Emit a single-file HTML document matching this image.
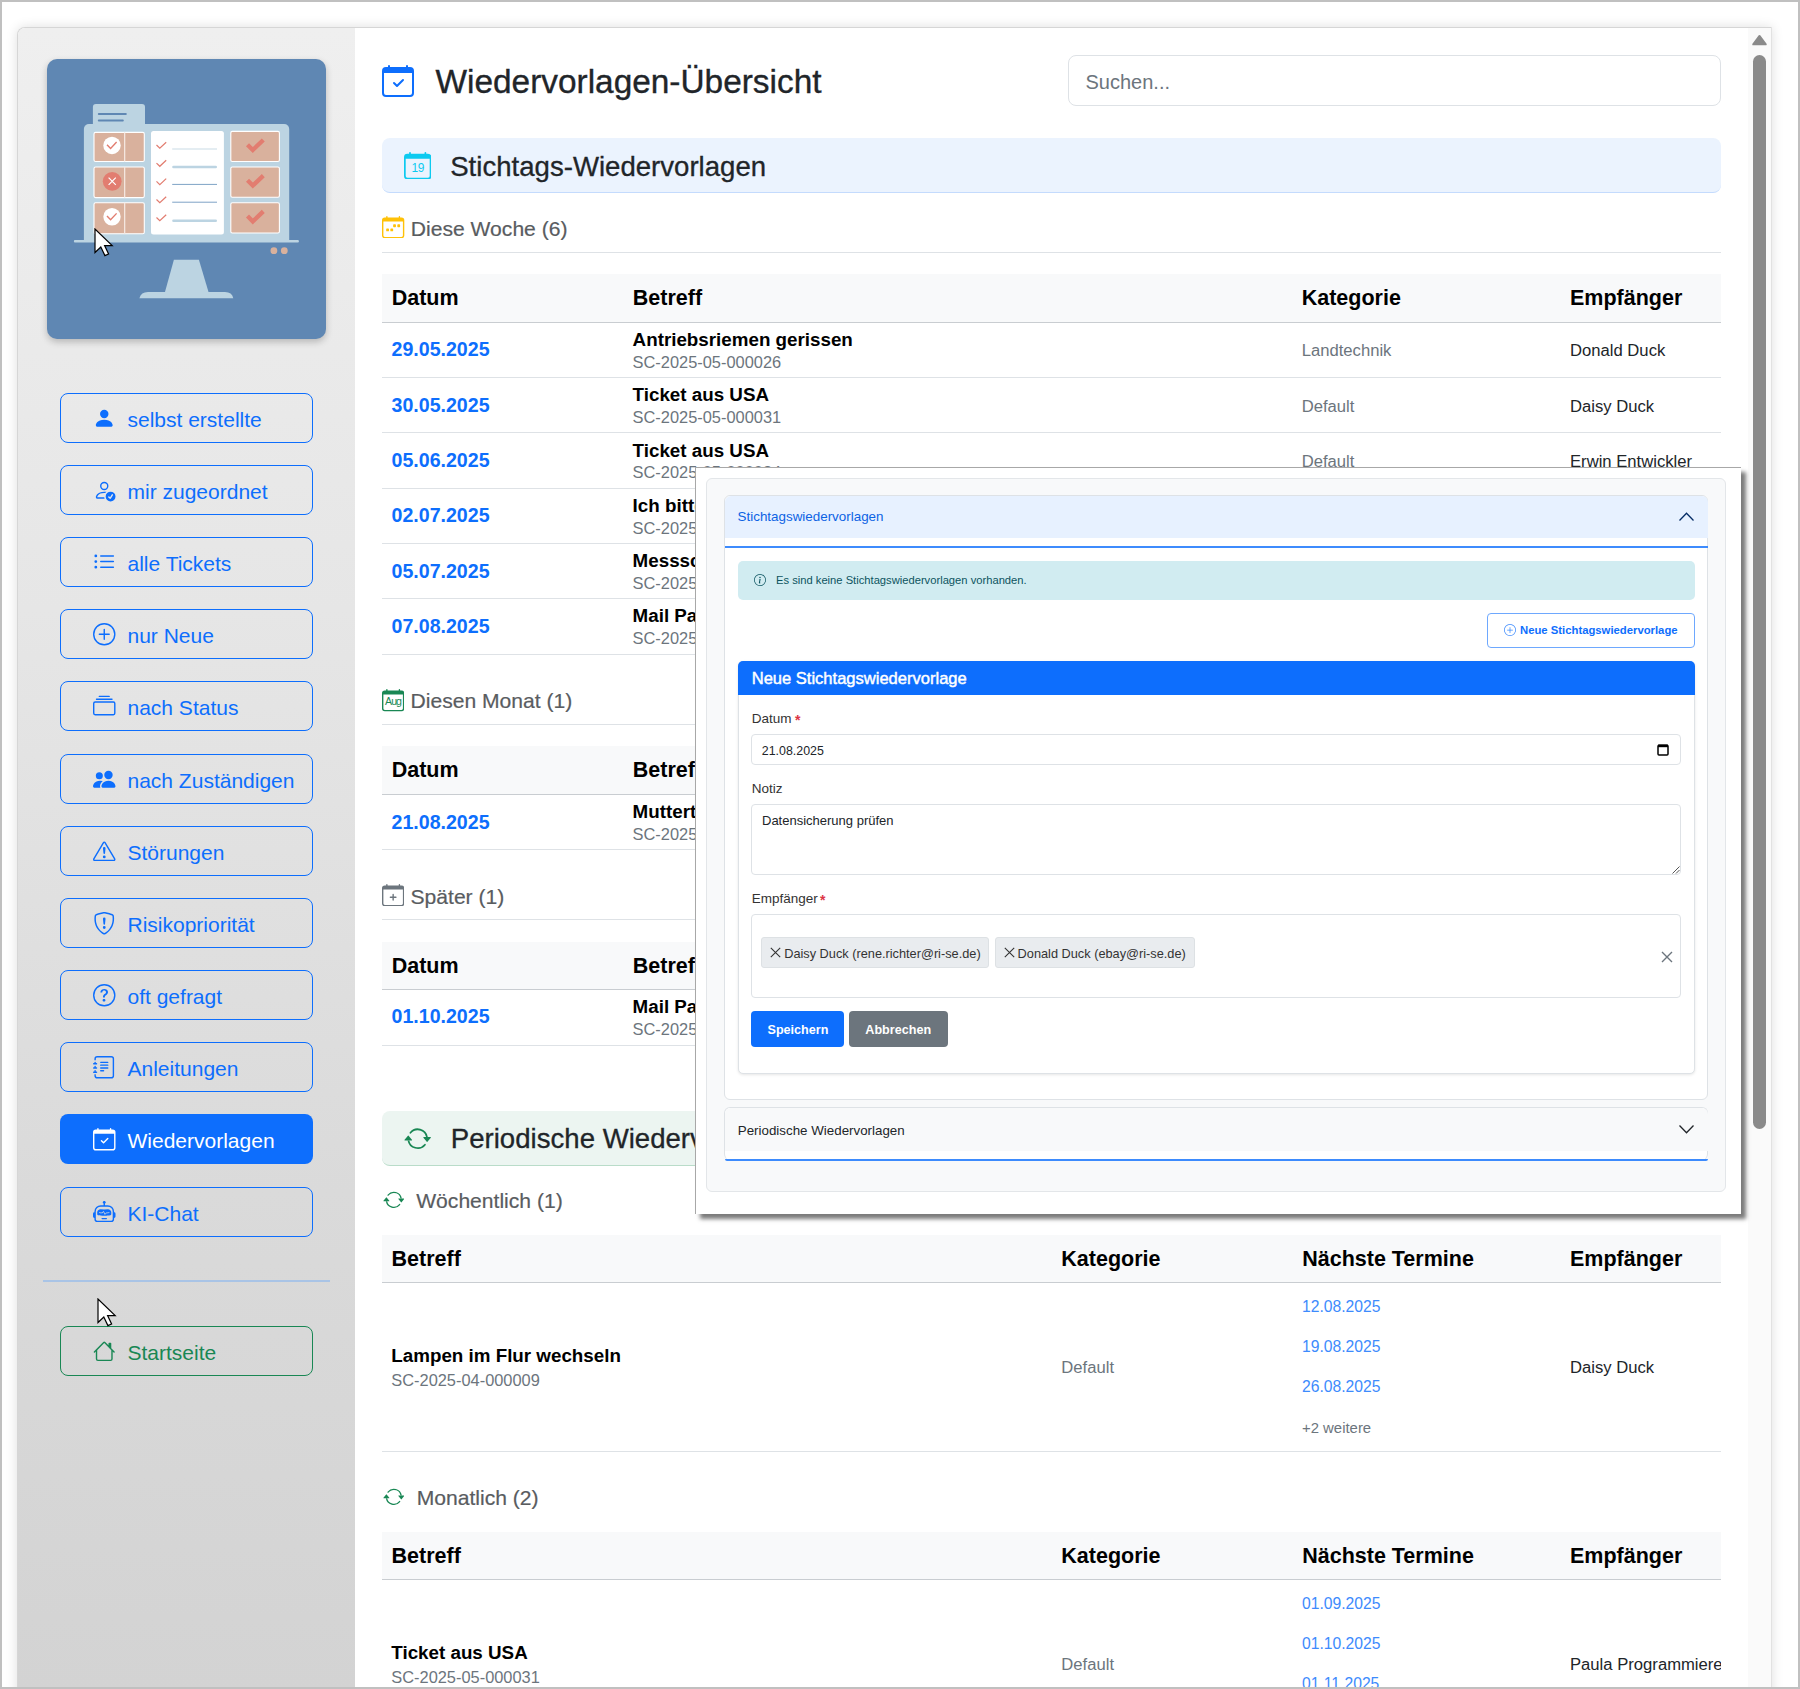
<!DOCTYPE html><html><head><meta charset="utf-8"><title>Wiedervorlagen</title><style>
html,body{margin:0;padding:0;width:1800px;height:1689px;overflow:hidden;background:#fff;font-family:"Liberation Sans",sans-serif;}
.t{position:absolute;white-space:nowrap;}
.r{position:absolute;box-sizing:border-box;}
</style></head><body>
<div class="r" style="left:17.00px;top:27.00px;width:1755.00px;height:1700.00px;background:#fff;border-top:1px solid #d6d6d6;border-left:1px solid #d6d6d6;border-right:1px solid #e2e2e2;box-shadow:0 0 12px rgba(0,0,0,0.13);border-top-left-radius:8px;"></div>
<div class="r" style="left:18.00px;top:28.00px;width:337.00px;height:1661.00px;background:linear-gradient(to bottom,#efefef 0%,#e6e6e6 35%,#dadada 70%,#d3d3d3 100%);border-top-left-radius:7px;"></div>
<div class="r" style="left:1748.00px;top:28.00px;width:23.00px;height:1661.00px;background:#fafafa;"></div>
<svg class="r" style="left:1750px;top:33px" width="19" height="14" viewBox="0 0 19 14"><path d="M9.5 2.9 L15.8 11.4 L3.2 11.4 Z" fill="#8a8a8a" stroke="#8a8a8a" stroke-width="1.9" stroke-linejoin="round"/></svg>
<div class="r" style="left:1753.00px;top:55.00px;width:13.00px;height:1074.00px;background:#8a8a8a;border-radius:6.5px;"></div>
<div class="r" style="left:47px;top:59px;width:279px;height:280px;background:#5f87b3;border-radius:10px;box-shadow:0 3px 7px rgba(0,0,0,0.22);overflow:hidden">
<svg width="279" height="280" viewBox="47 59 279 280" style="position:absolute;left:0;top:0"><path d="M83.9 241.4 V129 a5 5 0 0 1 5 -5 H284.2 a5 5 0 0 1 5 5 V241.4 Z" fill="#bcd4e2"/><rect x="73.9" y="240" width="225" height="2.4" rx="1" fill="#bcd4e2"/><rect x="92.9" y="103.9" width="52.1" height="30" rx="3" fill="#bcd4e2"/><rect x="97.8" y="112.9" width="29" height="2" rx="1" fill="#5f87b3"/><rect x="97.8" y="119.5" width="26" height="2" rx="1" fill="#5f87b3"/><rect x="94" y="132.4" width="50.3" height="29.099999999999994" rx="1.5" fill="#d9b19d" stroke="#fff" stroke-width="1.1"/><rect x="124" y="132.4" width="1.3" height="29.099999999999994" fill="#f4e6df"/><circle cx="112" cy="145.45" r="8.7" fill="#fff"/><path d="M107 144.64999999999998 l3.6 3.8 l6 -6.4" fill="none" stroke="#e27d70" stroke-width="1.4"/><rect x="94" y="167" width="50.3" height="30.599999999999994" rx="1.5" fill="#d9b19d" stroke="#fff" stroke-width="1.1"/><rect x="124" y="167" width="1.3" height="30.599999999999994" fill="#f4e6df"/><circle cx="112.2" cy="181.3" r="9.4" fill="#e27d70"/><path d="M108.6 177.70000000000002 l7.2 7.2 M115.8 177.70000000000002 l-7.2 7.2" stroke="#fff" stroke-width="1.2"/><rect x="94" y="202.8" width="50.3" height="30.94999999999999" rx="1.5" fill="#d9b19d" stroke="#fff" stroke-width="1.1"/><rect x="124" y="202.8" width="1.3" height="30.94999999999999" fill="#f4e6df"/><circle cx="112" cy="216.775" r="8.7" fill="#fff"/><path d="M107 215.975 l3.6 3.8 l6 -6.4" fill="none" stroke="#e27d70" stroke-width="1.4"/><rect x="151" y="131" width="72.9" height="103.4" rx="2.5" fill="#fff"/><path d="M156.5 145.0 l3.3 3.2 l6.4 -6.0" fill="none" stroke="#e27d70" stroke-width="1.2"/><rect x="172.2" y="148.4" width="44.8" height="1.2" fill="#d3e1ea"/><path d="M156.5 163.1 l3.3 3.2 l6.4 -6.0" fill="none" stroke="#e27d70" stroke-width="1.2"/><rect x="172.2" y="165.7" width="44.8" height="2.6" rx="1.3" fill="#bcd4e2"/><path d="M156.5 181.4 l3.3 3.2 l6.4 -6.0" fill="none" stroke="#e27d70" stroke-width="1.2"/><rect x="172.2" y="183.9" width="44.8" height="1" fill="#7fa3c6"/><path d="M156.5 199.5 l3.3 3.2 l6.4 -6.0" fill="none" stroke="#e27d70" stroke-width="1.2"/><rect x="172.2" y="201.7" width="44.8" height="1" fill="#7fa3c6"/><path d="M156.5 217.5 l3.3 3.2 l6.4 -6.0" fill="none" stroke="#e27d70" stroke-width="1.2"/><rect x="172.2" y="219.5" width="44.8" height="2.6" rx="1.3" fill="#bcd4e2"/><rect x="230.8" y="131.4" width="48.6" height="30.099999999999994" rx="1.5" fill="#d9b19d" stroke="#fff" stroke-width="1.1"/><path d="M247.5 144.64999999999998 l5.3 5.3 l10.5 -10" fill="none" stroke="#e27d70" stroke-width="4.3"/><rect x="230.8" y="167" width="48.6" height="30.19999999999999" rx="1.5" fill="#d9b19d" stroke="#fff" stroke-width="1.1"/><path d="M247.5 180.29999999999998 l5.3 5.3 l10.5 -10" fill="none" stroke="#e27d70" stroke-width="4.3"/><rect x="230.8" y="202.8" width="48.6" height="30.19999999999999" rx="1.5" fill="#d9b19d" stroke="#fff" stroke-width="1.1"/><path d="M247.5 216.1 l5.3 5.3 l10.5 -10" fill="none" stroke="#e27d70" stroke-width="4.3"/><circle cx="273.9" cy="250.7" r="3.4" fill="#d9b19d"/><circle cx="284.3" cy="250.7" r="3.4" fill="#d9b19d"/><path d="M173.9 259.7 H198.9 L208.6 292.2 H164.9 Z" fill="#bcd4e2"/><path d="M139.4 298.3 Q141 292 148 292 H225 Q232 292 233.3 298.3 Z" fill="#bcd4e2"/></svg>
</div>
<div class="r" style="left:60.00px;top:393.00px;width:253.00px;height:50.00px;border:1px solid #0d6efd;border-radius:8px;"></div>
<svg class="r" style="left:93.20px;top:407.20px;" width="22.50" height="22.50" viewBox="0 0 16 16" fill="#0d6efd"><path d="M3 14s-1 0-1-1 1-4 6-4 6 3 6 4-1 1-1 1zm5-6a3 3 0 1 0 0-6 3 3 0 0 0 0 6"/></svg>
<div class="t" style="left:127.50px;top:409.22px;font-size:21px;line-height:21px;color:#0d6efd;">selbst erstellte</div>
<div class="r" style="left:60.00px;top:465.00px;width:253.00px;height:50.00px;border:1px solid #0d6efd;border-radius:8px;"></div>
<svg class="r" style="left:93.20px;top:479.20px;" width="22.50" height="22.50" viewBox="0 0 16 16" fill="#0d6efd"><path d="M12.5 16a3.5 3.5 0 1 0 0-7 3.5 3.5 0 0 0 0 7m1.679-4.493-1.335 2.226a.75.75 0 0 1-1.174.144l-.774-.773a.5.5 0 0 1 .708-.708l.547.548 1.17-1.951a.5.5 0 1 1 .858.514M11 5a3 3 0 1 1-6 0 3 3 0 0 1 6 0M8 7a2 2 0 1 0 0-4 2 2 0 0 0 0 4"/><path d="M8.256 14a4.5 4.5 0 0 1-.229-1.004H3c.001-.246.154-.986.832-1.664C4.484 10.680 5.711 10 8 10q.39 0 .74.025c.226-.341.496-.65.804-.918Q8.844 9.002 8 9c-5 0-6 3-6 4s1 1 1 1z"/></svg>
<div class="t" style="left:127.50px;top:481.22px;font-size:21px;line-height:21px;color:#0d6efd;">mir zugeordnet</div>
<div class="r" style="left:60.00px;top:537.00px;width:253.00px;height:50.00px;border:1px solid #0d6efd;border-radius:8px;"></div>
<svg class="r" style="left:93.20px;top:551.20px;" width="22.50" height="22.50" viewBox="0 0 16 16" fill="#0d6efd"><path fill-rule="evenodd" d="M5 11.5a.5.5 0 0 1 .5-.5h9a.5.5 0 0 1 0 1h-9a.5.5 0 0 1-.5-.5m0-4a.5.5 0 0 1 .5-.5h9a.5.5 0 0 1 0 1h-9a.5.5 0 0 1-.5-.5m0-4a.5.5 0 0 1 .5-.5h9a.5.5 0 0 1 0 1h-9a.5.5 0 0 1-.5-.5m-3 1a1 1 0 1 0 0-2 1 1 0 0 0 0 2m0 4a1 1 0 1 0 0-2 1 1 0 0 0 0 2m0 4a1 1 0 1 0 0-2 1 1 0 0 0 0 2"/></svg>
<div class="t" style="left:127.50px;top:553.22px;font-size:21px;line-height:21px;color:#0d6efd;">alle Tickets</div>
<div class="r" style="left:60.00px;top:609.00px;width:253.00px;height:50.00px;border:1px solid #0d6efd;border-radius:8px;"></div>
<svg class="r" style="left:93.20px;top:623.20px;" width="22.50" height="22.50" viewBox="0 0 16 16" fill="#0d6efd"><path d="M8 15A7 7 0 1 1 8 1a7 7 0 0 1 0 14m0 1A8 8 0 1 0 8 0a8 8 0 0 0 0 16"/><path d="M8 4a.5.5 0 0 1 .5.5v3h3a.5.5 0 0 1 0 1h-3v3a.5.5 0 0 1-1 0v-3h-3a.5.5 0 0 1 0-1h3v-3A.5.5 0 0 1 8 4"/></svg>
<div class="t" style="left:127.50px;top:625.22px;font-size:21px;line-height:21px;color:#0d6efd;">nur Neue</div>
<div class="r" style="left:60.00px;top:681.00px;width:253.00px;height:50.00px;border:1px solid #0d6efd;border-radius:8px;"></div>
<svg class="r" style="left:93.20px;top:695.20px;" width="22.50" height="22.50" viewBox="0 0 16 16" fill="#0d6efd"><path d="M2.5 3.5a.5.5 0 0 1 0-1h11a.5.5 0 0 1 0 1zm2-2a.5.5 0 0 1 0-1h7a.5.5 0 0 1 0 1zM0 13a1.5 1.5 0 0 0 1.5 1.5h13A1.5 1.5 0 0 0 16 13V6a1.5 1.5 0 0 0-1.5-1.5h-13A1.5 1.5 0 0 0 0 6zm1.5.5A.5.5 0 0 1 1 13V6a.5.5 0 0 1 .5-.5h13a.5.5 0 0 1 .5.5v7a.5.5 0 0 1-.5.5z"/></svg>
<div class="t" style="left:127.50px;top:697.22px;font-size:21px;line-height:21px;color:#0d6efd;">nach Status</div>
<div class="r" style="left:60.00px;top:754.00px;width:253.00px;height:50.00px;border:1px solid #0d6efd;border-radius:8px;"></div>
<svg class="r" style="left:93.20px;top:768.20px;" width="22.50" height="22.50" viewBox="0 0 16 16" fill="#0d6efd"><path d="M7 14s-1 0-1-1 1-4 5-4 5 3 5 4-1 1-1 1zm4-6a3 3 0 1 0 0-6 3 3 0 0 0 0 6m-5.784 6A2.24 2.24 0 0 1 5 13c0-1.355.68-2.750 1.936-3.720A6.3 6.3 0 0 0 5 9c-4 0-5 3-5 4s1 1 1 1zM4.500 8a2.500 2.500 0 1 0 0-5 2.500 2.500 0 0 0 0 5"/></svg>
<div class="t" style="left:127.50px;top:770.22px;font-size:21px;line-height:21px;color:#0d6efd;">nach Zuständigen</div>
<div class="r" style="left:60.00px;top:826.00px;width:253.00px;height:50.00px;border:1px solid #0d6efd;border-radius:8px;"></div>
<svg class="r" style="left:93.20px;top:840.20px;" width="22.50" height="22.50" viewBox="0 0 16 16" fill="#0d6efd"><path d="M7.938 2.016A.13.13 0 0 1 8.002 2a.13.13 0 0 1 .063.016.15.15 0 0 1 .054.057l6.857 11.667c.036.06.035.124.002.183a.2.2 0 0 1-.054.06.1.1 0 0 1-.066.017H1.146a.1.1 0 0 1-.066-.017.2.2 0 0 1-.054-.06.18.18 0 0 1 .002-.183L7.884 2.073a.15.15 0 0 1 .054-.057m1.044-.45a1.13 1.13 0 0 0-1.96 0L.165 13.233c-.457.778.091 1.767.98 1.767h13.713c.889 0 1.438-.99.98-1.767z"/><path d="M7.002 12a1 1 0 1 1 2 0 1 1 0 0 1-2 0M7.1 5.995a.905.905 0 1 1 1.8 0l-.35 3.507a.552.552 0 0 1-1.1 0z"/></svg>
<div class="t" style="left:127.50px;top:842.22px;font-size:21px;line-height:21px;color:#0d6efd;">Störungen</div>
<div class="r" style="left:60.00px;top:898.00px;width:253.00px;height:50.00px;border:1px solid #0d6efd;border-radius:8px;"></div>
<svg class="r" style="left:93.20px;top:912.20px;" width="22.50" height="22.50" viewBox="0 0 16 16" fill="#0d6efd"><path d="M5.338 1.59a61 61 0 0 0-2.837.856.48.48 0 0 0-.328.39c-.554 4.157.726 7.19 2.253 9.188a10.7 10.7 0 0 0 2.287 2.233c.346.244.652.42.893.533q.18.085.293.118a1 1 0 0 0 .101.025 1 1 0 0 0 .1-.025q.114-.034.294-.118c.24-.113.547-.29.893-.533a10.7 10.7 0 0 0 2.287-2.233c1.527-1.997 2.807-5.031 2.253-9.188a.48.48 0 0 0-.328-.39c-.651-.213-1.75-.56-2.837-.855C9.552 1.29 8.531 1.067 8 1.067c-.53 0-1.552.223-2.662.524zM5.072.56C6.157.265 7.31 0 8 0s1.843.265 2.928.56c1.11.3 2.229.655 2.887.87a1.54 1.54 0 0 1 1.044 1.262c.596 4.477-.787 7.795-2.465 9.99a11.8 11.8 0 0 1-2.517 2.453 7 7 0 0 1-1.048.625c-.28.132-.581.24-.829.24s-.548-.108-.829-.24a7 7 0 0 1-1.048-.625 11.8 11.8 0 0 1-2.517-2.453C1.928 10.487.545 7.169 1.141 2.692A1.54 1.54 0 0 1 2.185 1.43 63 63 0 0 1 5.072.56"/><path d="M7.001 11a1 1 0 1 1 2 0 1 1 0 0 1-2 0M7.1 4.995a.905.905 0 1 1 1.8 0l-.35 3.507a.553.553 0 0 1-1.1 0z"/></svg>
<div class="t" style="left:127.50px;top:914.22px;font-size:21px;line-height:21px;color:#0d6efd;">Risikopriorität</div>
<div class="r" style="left:60.00px;top:970.00px;width:253.00px;height:50.00px;border:1px solid #0d6efd;border-radius:8px;"></div>
<svg class="r" style="left:93.20px;top:984.20px;" width="22.50" height="22.50" viewBox="0 0 16 16" fill="#0d6efd"><path d="M8 15A7 7 0 1 1 8 1a7 7 0 0 1 0 14m0 1A8 8 0 1 0 8 0a8 8 0 0 0 0 16"/><path d="M5.255 5.786a.237.237 0 0 0 .241.247h.825c.138 0 .248-.113.266-.25.09-.656.54-1.134 1.342-1.134.686 0 1.314.343 1.314 1.168 0 .635-.374.927-.965 1.371-.673.489-1.206 1.06-1.168 1.987l.003.217a.25.25 0 0 0 .25.246h.811a.25.25 0 0 0 .25-.25v-.105c0-.718.273-.927 1.01-1.486.609-.463 1.244-.977 1.244-2.056 0-1.511-1.276-2.241-2.673-2.241-1.267 0-2.655.59-2.75 2.286m1.557 5.763c0 .533.425.927 1.01.927.609 0 1.028-.394 1.028-.927 0-.552-.42-.94-1.029-.94-.584 0-1.009.388-1.009.94"/></svg>
<div class="t" style="left:127.50px;top:986.22px;font-size:21px;line-height:21px;color:#0d6efd;">oft gefragt</div>
<div class="r" style="left:60.00px;top:1042.00px;width:253.00px;height:50.00px;border:1px solid #0d6efd;border-radius:8px;"></div>
<svg class="r" style="left:93.20px;top:1056.20px;" width="22.50" height="22.50" viewBox="0 0 16 16" fill="#0d6efd"><path d="M5 10.5a.5.5 0 0 1 .5-.5h2a.5.5 0 0 1 0 1h-2a.5.5 0 0 1-.5-.5m0-2a.5.5 0 0 1 .5-.5h5a.5.5 0 0 1 0 1h-5a.5.5 0 0 1-.5-.5m0-2a.5.5 0 0 1 .5-.5h5a.5.5 0 0 1 0 1h-5a.5.5 0 0 1-.5-.5m0-2a.5.5 0 0 1 .5-.5h5a.5.5 0 0 1 0 1h-5a.5.5 0 0 1-.5-.5"/><path d="M3 0h10a2 2 0 0 1 2 2v12a2 2 0 0 1-2 2H3a2 2 0 0 1-2-2v-1h1v1a1 1 0 0 0 1 1h10a1 1 0 0 0 1-1V2a1 1 0 0 0-1-1H3a1 1 0 0 0-1 1v1H1V2a2 2 0 0 1 2-2"/><path d="M1 5v-.5a.5.5 0 0 1 1 0V5h.5a.5.5 0 0 1 0 1h-2a.5.5 0 0 1 0-1zm0 3v-.5a.5.5 0 0 1 1 0V8h.5a.5.5 0 0 1 0 1h-2a.5.5 0 0 1 0-1zm0 3v-.5a.5.5 0 0 1 1 0v.5h.5a.5.5 0 0 1 0 1h-2a.5.5 0 0 1 0-1z"/></svg>
<div class="t" style="left:127.50px;top:1058.22px;font-size:21px;line-height:21px;color:#0d6efd;">Anleitungen</div>
<div class="r" style="left:60.00px;top:1114.00px;width:253.00px;height:50.00px;background:#0d6efd;border-radius:8px;"></div>
<svg class="r" style="left:93.20px;top:1128.20px;" width="22.50" height="22.50" viewBox="0 0 16 16" fill="#fff"><path d="M10.854 7.146a.5.5 0 0 1 0 .708l-3 3a.5.5 0 0 1-.708 0l-1.5-1.5a.5.5 0 1 1 .708-.708L7.5 9.793l2.646-2.647a.5.5 0 0 1 .708 0"/><path d="M3.5 0a.5.5 0 0 1 .5.5V1h8V.5a.5.5 0 0 1 1 0V1h1a2 2 0 0 1 2 2v11a2 2 0 0 1-2 2H2a2 2 0 0 1-2-2V3a2 2 0 0 1 2-2h1V.5a.5.5 0 0 1 .5-.5M1 4v10a1 1 0 0 0 1 1h12a1 1 0 0 0 1-1V4z"/></svg>
<div class="t" style="left:127.50px;top:1130.22px;font-size:21px;line-height:21px;color:#fff;">Wiedervorlagen</div>
<div class="r" style="left:60.00px;top:1187.00px;width:253.00px;height:50.00px;border:1px solid #0d6efd;border-radius:8px;"></div>
<svg class="r" style="left:93.20px;top:1201.20px;" width="22.50" height="22.50" viewBox="0 0 16 16" fill="#0d6efd"><path d="M6 12.5a.5.5 0 0 1 .5-.5h3a.5.5 0 0 1 0 1h-3a.5.5 0 0 1-.5-.5M3 8.062C3 6.76 4.235 5.765 5.53 5.886a26.6 26.6 0 0 0 4.94 0C11.765 5.765 13 6.76 13 8.062v1.157a.93.93 0 0 1-.765.935c-.845.147-2.34.346-4.235.346s-3.39-.2-4.235-.346A.93.93 0 0 1 3 9.219zm4.542-.827a.25.25 0 0 0-.217.068l-.92.9a25 25 0 0 1-1.871-.183.25.25 0 0 0-.068.495c.55.076 1.232.149 2.02.193a.25.25 0 0 0 .189-.071l.754-.736.847 1.71a.25.25 0 0 0 .404.062l.932-.97a25 25 0 0 0 1.922-.188.25.25 0 0 0-.068-.495c-.538.074-1.207.145-1.98.189a.25.25 0 0 0-.166.076l-.754.785-.842-1.7a.25.25 0 0 0-.182-.135"/><path d="M8.5 1.866a1 1 0 1 0-1 0V3h-2A4.5 4.5 0 0 0 1 7.5V8a1 1 0 0 0-1 1v2a1 1 0 0 0 1 1v1a2 2 0 0 0 2 2h10a2 2 0 0 0 2-2v-1a1 1 0 0 0 1-1V9a1 1 0 0 0-1-1v-.5A4.5 4.5 0 0 0 10.5 3h-2zM14 7.5V13a1 1 0 0 1-1 1H3a1 1 0 0 1-1-1V7.5A3.5 3.5 0 0 1 5.5 4h5A3.5 3.5 0 0 1 14 7.5"/></svg>
<div class="t" style="left:127.50px;top:1203.22px;font-size:21px;line-height:21px;color:#0d6efd;">KI-Chat</div>
<div class="r" style="left:43.00px;top:1280.00px;width:287.00px;height:2.00px;background:#a9c4e6;"></div>
<div class="r" style="left:60.00px;top:1326.00px;width:253.00px;height:50.00px;border:1px solid #198754;border-radius:8px;"></div>
<svg class="r" style="left:93.20px;top:1340.20px;" width="22.50" height="22.50" viewBox="0 0 16 16" fill="#198754"><path d="M8.707 1.5a1 1 0 0 0-1.414 0L.646 8.146a.5.5 0 0 0 .708.708L2 8.207V13.5A1.5 1.5 0 0 0 3.5 15h9a1.5 1.5 0 0 0 1.5-1.5V8.207l.646.647a.5.5 0 0 0 .708-.708L13 5.793V2.5a.5.5 0 0 0-.5-.5h-1a.5.5 0 0 0-.5.5v1.293zM13 7.207V13.5a.5.5 0 0 1-.5.5h-9a.5.5 0 0 1-.5-.5V7.207l5-5z"/></svg>
<div class="t" style="left:127.50px;top:1342.22px;font-size:21px;line-height:21px;color:#198754;">Startseite</div>
<svg class="r" style="left:382.00px;top:65.00px;" width="32.00" height="32.00" viewBox="0 0 16 16" fill="#0d6efd"><path d="M10.854 7.146a.5.5 0 0 1 0 .708l-3 3a.5.5 0 0 1-.708 0l-1.5-1.5a.5.5 0 1 1 .708-.708L7.5 9.793l2.646-2.647a.5.5 0 0 1 .708 0"/><path d="M3.5 0a.5.5 0 0 1 .5.5V1h8V.5a.5.5 0 0 1 1 0V1h1a2 2 0 0 1 2 2v11a2 2 0 0 1-2 2H2a2 2 0 0 1-2-2V3a2 2 0 0 1 2-2h1V.5a.5.5 0 0 1 .5-.5M1 4v10a1 1 0 0 0 1 1h12a1 1 0 0 0 1-1V4z"/></svg>
<div class="t" style="left:435.50px;top:64.73px;font-size:33.4px;line-height:33.4px;color:#212529;-webkit-text-stroke:0.35px #212529;">Wiedervorlagen-Übersicht</div>
<div class="r" style="left:1068.00px;top:55.00px;width:653.00px;height:51.00px;border:1px solid #dee2e6;border-radius:8px;background:#fff;"></div>
<div class="t" style="left:1085.50px;top:72.07px;font-size:20px;line-height:20px;color:#6c757d;">Suchen...</div>
<div class="r" style="left:382.00px;top:138.00px;width:1339.00px;height:55.00px;background:#ebf3fe;border-bottom:1px solid #c4dbfd;border-radius:8px;"></div>
<svg class="r" style="left:403.70px;top:151.80px;" width="27.40" height="27.40" viewBox="0 0 16 16" fill="#0dcaf0"><text x="8" y="11.5" text-anchor="middle" font-family="Liberation Sans, sans-serif" font-size="7.0" letter-spacing="-0.2">19</text><path d="M3.5 0a.5.5 0 0 1 .5.5V1h8V.5a.5.5 0 0 1 1 0V1h1a2 2 0 0 1 2 2v11a2 2 0 0 1-2 2H2a2 2 0 0 1-2-2V3a2 2 0 0 1 2-2h1V.5a.5.5 0 0 1 .5-.5M1 4v10a1 1 0 0 0 1 1h12a1 1 0 0 0 1-1V4z"/></svg>
<div class="t" style="left:450.20px;top:152.84px;font-size:27.6px;line-height:27.6px;color:#212529;-webkit-text-stroke:0.3px #212529;">Stichtags-Wiedervorlagen</div>
<svg class="r" style="left:382.30px;top:215.80px;" width="22.30" height="22.30" viewBox="0 0 16 16" fill="#ffc107"><path d="M11 6.5a.5.5 0 0 1 .5-.5h1a.5.5 0 0 1 .5.5v1a.5.5 0 0 1-.5.5h-1a.5.5 0 0 1-.5-.5zm-3 0a.5.5 0 0 1 .5-.5h1a.5.5 0 0 1 .5.5v1a.5.5 0 0 1-.5.5h-1a.5.5 0 0 1-.5-.5zm-5 3a.5.5 0 0 1 .5-.5h1a.5.5 0 0 1 .5.5v1a.5.5 0 0 1-.5.5h-1a.5.5 0 0 1-.5-.5zm3 0a.5.5 0 0 1 .5-.5h1a.5.5 0 0 1 .5.5v1a.5.5 0 0 1-.5.5h-1a.5.5 0 0 1-.5-.5z"/><path d="M3.5 0a.5.5 0 0 1 .5.5V1h8V.5a.5.5 0 0 1 1 0V1h1a2 2 0 0 1 2 2v11a2 2 0 0 1-2 2H2a2 2 0 0 1-2-2V3a2 2 0 0 1 2-2h1V.5a.5.5 0 0 1 .5-.5M1 4v10a1 1 0 0 0 1 1h12a1 1 0 0 0 1-1V4z"/></svg>
<div class="t" style="left:410.80px;top:218.14px;font-size:21.1px;line-height:21.1px;color:#595c5f;-webkit-text-stroke:0.2px #595c5f;">Diese Woche (6)</div>
<div class="r" style="left:382.00px;top:251.50px;width:1339.00px;height:1.00px;background:#dee2e6;"></div>
<div class="r" style="left:382.00px;top:274.00px;width:1339.00px;height:48.00px;background:#f8f9fa;"></div>
<div class="r" style="left:382.00px;top:321.50px;width:1339.00px;height:1.50px;background:#c9cdd1;"></div>
<div class="t" style="left:391.70px;top:287.80px;font-size:21.5px;line-height:21.5px;color:#000;font-weight:700;">Datum</div>
<div class="t" style="left:632.80px;top:287.80px;font-size:21.5px;line-height:21.5px;color:#000;font-weight:700;">Betreff</div>
<div class="t" style="left:1301.70px;top:287.80px;font-size:21.5px;line-height:21.5px;color:#000;font-weight:700;">Kategorie</div>
<div class="t" style="left:1570.00px;top:287.80px;font-size:21.5px;line-height:21.5px;color:#000;font-weight:700;">Empfänger</div>
<div class="t" style="left:391.50px;top:340.21px;font-size:19.6px;line-height:19.6px;color:#0d6efd;font-weight:700;">29.05.2025</div>
<div class="t" style="left:632.60px;top:330.79px;font-size:18.8px;line-height:18.8px;color:#000;font-weight:700;">Antriebsriemen gerissen</div>
<div class="t" style="left:632.60px;top:353.62px;font-size:16.4px;line-height:16.4px;color:#6c757d;">SC-2025-05-000026</div>
<div class="t" style="left:1301.70px;top:343.31px;font-size:16.65px;line-height:16.65px;color:#6c757d;">Landtechnik</div>
<div class="t" style="left:1570.00px;top:343.31px;font-size:16.65px;line-height:16.65px;color:#212529;">Donald Duck</div>
<div class="r" style="left:382.00px;top:377.00px;width:1339.00px;height:1.00px;background:#dee2e6;"></div>
<div class="t" style="left:391.50px;top:395.71px;font-size:19.6px;line-height:19.6px;color:#0d6efd;font-weight:700;">30.05.2025</div>
<div class="t" style="left:632.60px;top:386.29px;font-size:18.8px;line-height:18.8px;color:#000;font-weight:700;">Ticket aus USA</div>
<div class="t" style="left:632.60px;top:409.12px;font-size:16.4px;line-height:16.4px;color:#6c757d;">SC-2025-05-000031</div>
<div class="t" style="left:1301.70px;top:398.81px;font-size:16.65px;line-height:16.65px;color:#6c757d;">Default</div>
<div class="t" style="left:1570.00px;top:398.81px;font-size:16.65px;line-height:16.65px;color:#212529;">Daisy Duck</div>
<div class="r" style="left:382.00px;top:432.30px;width:1339.00px;height:1.00px;background:#dee2e6;"></div>
<div class="t" style="left:391.50px;top:451.01px;font-size:19.6px;line-height:19.6px;color:#0d6efd;font-weight:700;">05.06.2025</div>
<div class="t" style="left:632.60px;top:441.59px;font-size:18.8px;line-height:18.8px;color:#000;font-weight:700;">Ticket aus USA</div>
<div class="t" style="left:632.60px;top:464.42px;font-size:16.4px;line-height:16.4px;color:#6c757d;">SC-2025-05-000034</div>
<div class="t" style="left:1301.70px;top:454.11px;font-size:16.65px;line-height:16.65px;color:#6c757d;">Default</div>
<div class="t" style="left:1570.00px;top:454.11px;font-size:16.65px;line-height:16.65px;color:#212529;">Erwin Entwickler</div>
<div class="r" style="left:382.00px;top:487.60px;width:1339.00px;height:1.00px;background:#dee2e6;"></div>
<div class="t" style="left:391.50px;top:506.31px;font-size:19.6px;line-height:19.6px;color:#0d6efd;font-weight:700;">02.07.2025</div>
<div class="t" style="left:632.60px;top:496.89px;font-size:18.8px;line-height:18.8px;color:#000;font-weight:700;">Ich bitte um Rückruf</div>
<div class="t" style="left:632.60px;top:519.72px;font-size:16.4px;line-height:16.4px;color:#6c757d;">SC-2025-06-000041</div>
<div class="t" style="left:1301.70px;top:509.41px;font-size:16.65px;line-height:16.65px;color:#6c757d;">Default</div>
<div class="t" style="left:1570.00px;top:509.41px;font-size:16.65px;line-height:16.65px;color:#212529;">Daisy Duck</div>
<div class="r" style="left:382.00px;top:542.80px;width:1339.00px;height:1.00px;background:#dee2e6;"></div>
<div class="t" style="left:391.50px;top:561.51px;font-size:19.6px;line-height:19.6px;color:#0d6efd;font-weight:700;">05.07.2025</div>
<div class="t" style="left:632.60px;top:552.09px;font-size:18.8px;line-height:18.8px;color:#000;font-weight:700;">Messschieber defekt</div>
<div class="t" style="left:632.60px;top:574.92px;font-size:16.4px;line-height:16.4px;color:#6c757d;">SC-2025-06-000044</div>
<div class="t" style="left:1301.70px;top:564.61px;font-size:16.65px;line-height:16.65px;color:#6c757d;">Default</div>
<div class="t" style="left:1570.00px;top:564.61px;font-size:16.65px;line-height:16.65px;color:#212529;">Donald Duck</div>
<div class="r" style="left:382.00px;top:598.10px;width:1339.00px;height:1.00px;background:#dee2e6;"></div>
<div class="t" style="left:391.50px;top:616.81px;font-size:19.6px;line-height:19.6px;color:#0d6efd;font-weight:700;">07.08.2025</div>
<div class="t" style="left:632.60px;top:607.39px;font-size:18.8px;line-height:18.8px;color:#000;font-weight:700;">Mail Passwort vergessen</div>
<div class="t" style="left:632.60px;top:630.22px;font-size:16.4px;line-height:16.4px;color:#6c757d;">SC-2025-07-000052</div>
<div class="t" style="left:1301.70px;top:619.91px;font-size:16.65px;line-height:16.65px;color:#6c757d;">Default</div>
<div class="t" style="left:1570.00px;top:619.91px;font-size:16.65px;line-height:16.65px;color:#212529;">Daisy Duck</div>
<div class="r" style="left:382.00px;top:653.50px;width:1339.00px;height:1.00px;background:#dee2e6;"></div>
<svg class="r" style="left:382.00px;top:689.40px;" width="22.30" height="22.30" viewBox="0 0 16 16" fill="#198754"><text x="7.9" y="11.3" text-anchor="middle" font-family="Liberation Sans, sans-serif" font-size="7.6" letter-spacing="-0.7">Aug</text><path d="M3.5 0a.5.5 0 0 1 .5.5V1h8V.5a.5.5 0 0 1 1 0V1h1a2 2 0 0 1 2 2v11a2 2 0 0 1-2 2H2a2 2 0 0 1-2-2V3a2 2 0 0 1 2-2h1V.5a.5.5 0 0 1 .5-.5M1 4v10a1 1 0 0 0 1 1h12a1 1 0 0 0 1-1V4z"/></svg>
<div class="t" style="left:410.50px;top:690.14px;font-size:21.1px;line-height:21.1px;color:#595c5f;-webkit-text-stroke:0.2px #595c5f;">Diesen Monat (1)</div>
<div class="r" style="left:382.00px;top:724.00px;width:1339.00px;height:1.00px;background:#dee2e6;"></div>
<div class="r" style="left:382.00px;top:745.70px;width:1339.00px;height:48.60px;background:#f8f9fa;"></div>
<div class="r" style="left:382.00px;top:793.80px;width:1339.00px;height:1.50px;background:#c9cdd1;"></div>
<div class="t" style="left:391.70px;top:759.50px;font-size:21.5px;line-height:21.5px;color:#000;font-weight:700;">Datum</div>
<div class="t" style="left:632.80px;top:759.50px;font-size:21.5px;line-height:21.5px;color:#000;font-weight:700;">Betreff</div>
<div class="t" style="left:1301.70px;top:759.50px;font-size:21.5px;line-height:21.5px;color:#000;font-weight:700;">Kategorie</div>
<div class="t" style="left:1570.00px;top:759.50px;font-size:21.5px;line-height:21.5px;color:#000;font-weight:700;">Empfänger</div>
<div class="t" style="left:391.50px;top:812.51px;font-size:19.6px;line-height:19.6px;color:#0d6efd;font-weight:700;">21.08.2025</div>
<div class="t" style="left:632.60px;top:803.09px;font-size:18.8px;line-height:18.8px;color:#000;font-weight:700;">Muttertag Blumen</div>
<div class="t" style="left:632.60px;top:825.92px;font-size:16.4px;line-height:16.4px;color:#6c757d;">SC-2025-08-000061</div>
<div class="t" style="left:1301.70px;top:815.61px;font-size:16.65px;line-height:16.65px;color:#6c757d;">Default</div>
<div class="t" style="left:1570.00px;top:815.61px;font-size:16.65px;line-height:16.65px;color:#212529;">Daisy Duck</div>
<div class="r" style="left:382.00px;top:849.00px;width:1339.00px;height:1.00px;background:#dee2e6;"></div>
<svg class="r" style="left:382.00px;top:883.60px;" width="22.30" height="22.30" viewBox="0 0 16 16" fill="#6c757d"><path d="M8 7a.5.5 0 0 1 .5.5V9H10a.5.5 0 0 1 0 1H8.5v1.5a.5.5 0 0 1-1 0V10H6a.5.5 0 0 1 0-1h1.5V7.5A.5.5 0 0 1 8 7"/><path d="M3.5 0a.5.5 0 0 1 .5.5V1h8V.5a.5.5 0 0 1 1 0V1h1a2 2 0 0 1 2 2v11a2 2 0 0 1-2 2H2a2 2 0 0 1-2-2V3a2 2 0 0 1 2-2h1V.5a.5.5 0 0 1 .5-.5M1 4v10a1 1 0 0 0 1 1h12a1 1 0 0 0 1-1V4z"/></svg>
<div class="t" style="left:410.50px;top:886.14px;font-size:21.1px;line-height:21.1px;color:#595c5f;-webkit-text-stroke:0.2px #595c5f;">Später (1)</div>
<div class="r" style="left:382.00px;top:919.40px;width:1339.00px;height:1.00px;background:#dee2e6;"></div>
<div class="r" style="left:382.00px;top:941.90px;width:1339.00px;height:47.30px;background:#f8f9fa;"></div>
<div class="r" style="left:382.00px;top:988.70px;width:1339.00px;height:1.50px;background:#c9cdd1;"></div>
<div class="t" style="left:391.70px;top:955.70px;font-size:21.5px;line-height:21.5px;color:#000;font-weight:700;">Datum</div>
<div class="t" style="left:632.80px;top:955.70px;font-size:21.5px;line-height:21.5px;color:#000;font-weight:700;">Betreff</div>
<div class="t" style="left:1301.70px;top:955.70px;font-size:21.5px;line-height:21.5px;color:#000;font-weight:700;">Kategorie</div>
<div class="t" style="left:1570.00px;top:955.70px;font-size:21.5px;line-height:21.5px;color:#000;font-weight:700;">Empfänger</div>
<div class="t" style="left:391.50px;top:1007.41px;font-size:19.6px;line-height:19.6px;color:#0d6efd;font-weight:700;">01.10.2025</div>
<div class="t" style="left:632.60px;top:997.99px;font-size:18.8px;line-height:18.8px;color:#000;font-weight:700;">Mail Passwort abgelaufen</div>
<div class="t" style="left:632.60px;top:1020.82px;font-size:16.4px;line-height:16.4px;color:#6c757d;">SC-2025-09-000070</div>
<div class="t" style="left:1301.70px;top:1010.51px;font-size:16.65px;line-height:16.65px;color:#6c757d;">Default</div>
<div class="t" style="left:1570.00px;top:1010.51px;font-size:16.65px;line-height:16.65px;color:#212529;">Donald Duck</div>
<div class="r" style="left:382.00px;top:1045.10px;width:1339.00px;height:1.00px;background:#dee2e6;"></div>
<div class="r" style="left:382.00px;top:1111.00px;width:1339.00px;height:54.50px;background:#ecf5f1;border-bottom:1px solid #b9dcc9;border-radius:8px;"></div>
<svg class="r" style="left:403.80px;top:1124.60px;" width="27.40" height="27.40" viewBox="0 0 16 16" fill="#198754"><path d="M11.534 7h3.932a.25.25 0 0 1 .192.41l-1.966 2.36a.25.25 0 0 1-.384 0l-1.966-2.36a.25.25 0 0 1 .192-.41m-11 2h3.932a.25.25 0 0 0 .192-.41L2.692 6.23a.25.25 0 0 0-.384 0L.342 8.59A.25.25 0 0 0 .534 9"/><path fill-rule="evenodd" d="M8 3c-1.552 0-2.94.707-3.857 1.818a.5.5 0 1 1-.771-.636A6.002 6.002 0 0 1 13.917 7H12.9A5 5 0 0 0 8 3M3.1 9a5.002 5.002 0 0 0 8.757 2.182.5.5 0 1 1 .771.636A6.002 6.002 0 0 1 2.083 9z"/></svg>
<div class="t" style="left:450.80px;top:1124.74px;font-size:27.6px;line-height:27.6px;color:#212529;-webkit-text-stroke:0.3px #212529;">Periodische Wiedervorlagen</div>
<svg class="r" style="left:382.60px;top:1189.00px;" width="21.70" height="21.70" viewBox="0 0 16 16" fill="#198754"><path d="M11.534 7h3.932a.25.25 0 0 1 .192.41l-1.966 2.36a.25.25 0 0 1-.384 0l-1.966-2.36a.25.25 0 0 1 .192-.41m-11 2h3.932a.25.25 0 0 0 .192-.41L2.692 6.23a.25.25 0 0 0-.384 0L.342 8.59A.25.25 0 0 0 .534 9"/><path fill-rule="evenodd" d="M8 3c-1.552 0-2.94.707-3.857 1.818a.5.5 0 1 1-.771-.636A6.002 6.002 0 0 1 13.917 7H12.9A5 5 0 0 0 8 3M3.1 9a5.002 5.002 0 0 0 8.757 2.182.5.5 0 1 1 .771.636A6.002 6.002 0 0 1 2.083 9z"/></svg>
<div class="t" style="left:416.20px;top:1190.04px;font-size:21.1px;line-height:21.1px;color:#595c5f;-webkit-text-stroke:0.2px #595c5f;">Wöchentlich (1)</div>
<div class="r" style="left:382.00px;top:1234.80px;width:1339.00px;height:47.50px;background:#f8f9fa;"></div>
<div class="r" style="left:382.00px;top:1281.80px;width:1339.00px;height:1.50px;background:#c9cdd1;"></div>
<div class="t" style="left:391.50px;top:1248.60px;font-size:21.5px;line-height:21.5px;color:#000;font-weight:700;">Betreff</div>
<div class="t" style="left:1061.30px;top:1248.60px;font-size:21.5px;line-height:21.5px;color:#000;font-weight:700;">Kategorie</div>
<div class="t" style="left:1302.20px;top:1248.60px;font-size:21.5px;line-height:21.5px;color:#000;font-weight:700;">Nächste Termine</div>
<div class="t" style="left:1570.00px;top:1248.60px;font-size:21.5px;line-height:21.5px;color:#000;font-weight:700;">Empfänger</div>
<div class="t" style="left:391.30px;top:1347.09px;font-size:18.8px;line-height:18.8px;color:#000;font-weight:700;">Lampen im Flur wechseln</div>
<div class="t" style="left:391.30px;top:1371.92px;font-size:16.4px;line-height:16.4px;color:#6c757d;">SC-2025-04-000009</div>
<div class="t" style="left:1061.30px;top:1359.91px;font-size:16.65px;line-height:16.65px;color:#6c757d;">Default</div>
<div class="r" style="left:1560px;top:1352.30px;width:161px;height:40px;overflow:hidden">
<div class="t" style="left:10.00px;top:7.61px;font-size:16.65px;line-height:16.65px;color:#212529;">Daisy Duck</div>
</div>
<div class="t" style="left:1302.00px;top:1298.71px;font-size:15.7px;line-height:15.7px;color:#3d8bfd;">12.08.2025</div>
<div class="t" style="left:1302.00px;top:1338.71px;font-size:15.7px;line-height:15.7px;color:#3d8bfd;">19.08.2025</div>
<div class="t" style="left:1302.00px;top:1378.71px;font-size:15.7px;line-height:15.7px;color:#3d8bfd;">26.08.2025</div>
<div class="t" style="left:1302.00px;top:1421.39px;font-size:14.9px;line-height:14.9px;color:#6c757d;">+2 weitere</div>
<div class="r" style="left:382.00px;top:1450.70px;width:1339.00px;height:1.00px;background:#dee2e6;"></div>
<svg class="r" style="left:382.60px;top:1486.00px;" width="21.70" height="21.70" viewBox="0 0 16 16" fill="#198754"><path d="M11.534 7h3.932a.25.25 0 0 1 .192.41l-1.966 2.36a.25.25 0 0 1-.384 0l-1.966-2.36a.25.25 0 0 1 .192-.41m-11 2h3.932a.25.25 0 0 0 .192-.41L2.692 6.23a.25.25 0 0 0-.384 0L.342 8.59A.25.25 0 0 0 .534 9"/><path fill-rule="evenodd" d="M8 3c-1.552 0-2.94.707-3.857 1.818a.5.5 0 1 1-.771-.636A6.002 6.002 0 0 1 13.917 7H12.9A5 5 0 0 0 8 3M3.1 9a5.002 5.002 0 0 0 8.757 2.182.5.5 0 1 1 .771.636A6.002 6.002 0 0 1 2.083 9z"/></svg>
<div class="t" style="left:416.70px;top:1487.34px;font-size:21.1px;line-height:21.1px;color:#595c5f;-webkit-text-stroke:0.2px #595c5f;">Monatlich (2)</div>
<div class="r" style="left:382.00px;top:1531.90px;width:1339.00px;height:47.20px;background:#f8f9fa;"></div>
<div class="r" style="left:382.00px;top:1578.60px;width:1339.00px;height:1.50px;background:#c9cdd1;"></div>
<div class="t" style="left:391.50px;top:1545.70px;font-size:21.5px;line-height:21.5px;color:#000;font-weight:700;">Betreff</div>
<div class="t" style="left:1061.30px;top:1545.70px;font-size:21.5px;line-height:21.5px;color:#000;font-weight:700;">Kategorie</div>
<div class="t" style="left:1302.20px;top:1545.70px;font-size:21.5px;line-height:21.5px;color:#000;font-weight:700;">Nächste Termine</div>
<div class="t" style="left:1570.00px;top:1545.70px;font-size:21.5px;line-height:21.5px;color:#000;font-weight:700;">Empfänger</div>
<div class="t" style="left:391.30px;top:1643.89px;font-size:18.8px;line-height:18.8px;color:#000;font-weight:700;">Ticket aus USA</div>
<div class="t" style="left:391.30px;top:1668.72px;font-size:16.4px;line-height:16.4px;color:#6c757d;">SC-2025-05-000031</div>
<div class="t" style="left:1061.30px;top:1656.71px;font-size:16.65px;line-height:16.65px;color:#6c757d;">Default</div>
<div class="r" style="left:1560px;top:1649.10px;width:161px;height:40px;overflow:hidden">
<div class="t" style="left:10.00px;top:7.61px;font-size:16.65px;line-height:16.65px;color:#212529;">Paula Programmierer</div>
</div>
<div class="t" style="left:1302.00px;top:1595.51px;font-size:15.7px;line-height:15.7px;color:#3d8bfd;">01.09.2025</div>
<div class="t" style="left:1302.00px;top:1635.51px;font-size:15.7px;line-height:15.7px;color:#3d8bfd;">01.10.2025</div>
<div class="t" style="left:1302.00px;top:1675.51px;font-size:15.7px;line-height:15.7px;color:#3d8bfd;">01.11.2025</div>
<div class="t" style="left:1302.00px;top:1718.19px;font-size:14.9px;line-height:14.9px;color:#6c757d;">+2 weitere</div>
<div class="r" style="left:695.00px;top:467.00px;width:1046.00px;height:746.50px;background:#fff;border:1px solid #a8a8a8;border-right:none;border-bottom:none;box-shadow:5px 5px 4px rgba(0,0,0,0.52);"></div>
<div class="r" style="left:706.00px;top:478.00px;width:1020.00px;height:714.30px;background:#f8f9fa;border:1px solid #e3e6e9;border-radius:6px;"></div>
<div class="r" style="left:724.00px;top:495.00px;width:984.00px;height:605.40px;background:#fff;border:1px solid #dee2e6;border-radius:6px;"></div>
<div class="r" style="left:724.50px;top:495.50px;width:983.00px;height:42.60px;background:#e7f1ff;border-top-left-radius:6px;border-top-right-radius:6px;"></div>
<div class="r" style="left:724.50px;top:545.60px;width:983.00px;height:2.00px;background:#3d8bfd;"></div>
<div class="t" style="left:737.60px;top:510.26px;font-size:13.4px;line-height:13.4px;color:#0c63e4;">Stichtagswiedervorlagen</div>
<svg class="r" style="left:1678px;top:511px" width="17" height="11" viewBox="0 0 17 11"><path d="M1.5 9.5 L8.5 2.3 L15.5 9.5" fill="none" stroke="#052c65" stroke-width="1.3"/></svg>
<div class="r" style="left:738.00px;top:561.40px;width:957.00px;height:38.60px;background:#d1ecf1;border-radius:5px;"></div>
<svg class="r" style="left:754.00px;top:573.70px;" width="12.00" height="12.00" viewBox="0 0 16 16" fill="#0c5460"><path d="M8 15A7 7 0 1 1 8 1a7 7 0 0 1 0 14m0 1A8 8 0 1 0 8 0a8 8 0 0 0 0 16"/><path d="m8.93 6.588-2.29.287-.082.38.45.083c.294.07.352.176.288.469l-.738 3.468c-.194.897.105 1.319.808 1.319.545 0 1.178-.252 1.465-.598l.088-.416c-.2.176-.492.246-.686.246-.275 0-.375-.193-.304-.533zM9 4.5a1 1 0 1 1-2 0 1 1 0 0 1 2 0"/></svg>
<div class="t" style="left:776.00px;top:575.12px;font-size:11.2px;line-height:11.2px;color:#0c5460;">Es sind keine Stichtagswiedervorlagen vorhanden.</div>
<div class="r" style="left:1487.40px;top:612.90px;width:207.30px;height:34.70px;background:#fff;border:1px solid #6ea8fe;border-radius:4px;"></div>
<svg class="r" style="left:1504.00px;top:624.00px;" width="12.00" height="12.00" viewBox="0 0 16 16" fill="#3d8bfd"><path d="M8 15A7 7 0 1 1 8 1a7 7 0 0 1 0 14m0 1A8 8 0 1 0 8 0a8 8 0 0 0 0 16"/><path d="M8 4a.5.5 0 0 1 .5.5v3h3a.5.5 0 0 1 0 1h-3v3a.5.5 0 0 1-1 0v-3h-3a.5.5 0 0 1 0-1h3v-3A.5.5 0 0 1 8 4"/></svg>
<div class="t" style="left:1520.00px;top:625.43px;font-size:11.3px;line-height:11.3px;color:#0d6efd;font-weight:700;">Neue Stichtagswiedervorlage</div>
<div class="r" style="left:738.00px;top:661.00px;width:956.70px;height:412.80px;background:#fff;border:1px solid #dee2e6;border-radius:5px;box-shadow:0 1px 3px rgba(0,0,0,0.10);"></div>
<div class="r" style="left:738.00px;top:661.00px;width:956.70px;height:34.00px;background:#0d6efd;border-top-left-radius:5px;border-top-right-radius:5px;"></div>
<div class="t" style="left:751.70px;top:670.69px;font-size:16.55px;line-height:16.55px;color:#fff;-webkit-text-stroke:0.45px #fff;">Neue Stichtagswiedervorlage</div>
<div class="t" style="left:751.70px;top:712.27px;font-size:13.5px;line-height:13.5px;color:#333;">Datum</div>
<div class="t" style="left:795.00px;top:712.65px;font-size:14px;line-height:14px;color:#dc3545;font-weight:700;">*</div>
<div class="r" style="left:751.40px;top:734.30px;width:929.20px;height:31.20px;border:1px solid #dee2e6;border-radius:4px;"></div>
<div class="t" style="left:761.80px;top:744.50px;font-size:12.4px;line-height:12.4px;color:#212529;">21.08.2025</div>
<svg class="r" style="left:1656.5px;top:743px" width="12" height="13" viewBox="0 0 12 13"><rect x="1" y="2.2" width="10" height="9.8" rx="1" fill="none" stroke="#000" stroke-width="1.5"/><rect x="1" y="1.6" width="10" height="2.6" fill="#000"/></svg>
<div class="t" style="left:751.70px;top:782.27px;font-size:13.5px;line-height:13.5px;color:#333;">Notiz</div>
<div class="r" style="left:751.40px;top:804.40px;width:929.20px;height:70.80px;border:1px solid #dee2e6;border-radius:4px;"></div>
<div class="t" style="left:762.00px;top:814.20px;font-size:13px;line-height:13px;color:#212529;">Datensicherung prüfen</div>
<svg class="r" style="left:1672px;top:866px" width="8" height="8" viewBox="0 0 8 8"><path d="M0.5 7.5 L7.5 0.5 M4 7.5 L7.5 4" stroke="#555" stroke-width="1"/></svg>
<div class="t" style="left:751.70px;top:892.17px;font-size:13.5px;line-height:13.5px;color:#333;">Empfänger</div>
<div class="t" style="left:820.00px;top:892.55px;font-size:14px;line-height:14px;color:#dc3545;font-weight:700;">*</div>
<div class="r" style="left:751.40px;top:913.70px;width:929.20px;height:84.40px;border:1px solid #dee2e6;border-radius:4px;"></div>
<div class="r" style="left:761.10px;top:937.20px;width:228.30px;height:30.60px;background:#e9ecef;border:1px solid #dde1e4;border-radius:3px;"></div>
<svg class="r" style="left:770px;top:947px" width="11" height="11" viewBox="0 0 11 11"><path d="M0.8 0.8 L10.2 10.2 M10.2 0.8 L0.8 10.2" stroke="#333" stroke-width="1.1"/></svg>
<div class="t" style="left:784.20px;top:947.81px;font-size:12.75px;line-height:12.75px;color:#333;">Daisy Duck (rene.richter@ri-se.de)</div>
<div class="r" style="left:995.00px;top:937.20px;width:200.30px;height:30.60px;background:#e9ecef;border:1px solid #dde1e4;border-radius:3px;"></div>
<svg class="r" style="left:1003.5px;top:947px" width="11" height="11" viewBox="0 0 11 11"><path d="M0.8 0.8 L10.2 10.2 M10.2 0.8 L0.8 10.2" stroke="#333" stroke-width="1.1"/></svg>
<div class="t" style="left:1017.60px;top:947.81px;font-size:12.75px;line-height:12.75px;color:#333;">Donald Duck (ebay@ri-se.de)</div>
<svg class="r" style="left:1660.5px;top:950.5px" width="12" height="12" viewBox="0 0 12 12"><path d="M1 1 L11 11 M11 1 L1 11" stroke="#6c757d" stroke-width="1.4"/></svg>
<div class="r" style="left:751.00px;top:1011.40px;width:93.40px;height:35.30px;background:#0d6efd;border-radius:4px;"></div>
<div class="t" style="left:767.50px;top:1023.63px;font-size:12.6px;line-height:12.6px;color:#fff;font-weight:700;">Speichern</div>
<div class="r" style="left:848.90px;top:1011.40px;width:99.10px;height:35.30px;background:#6c757d;border-radius:4px;"></div>
<div class="t" style="left:865.30px;top:1023.63px;font-size:12.6px;line-height:12.6px;color:#fff;font-weight:700;">Abbrechen</div>
<div class="r" style="left:724.00px;top:1107.40px;width:984.00px;height:53.00px;background:#fff;border:1px solid #dee2e6;border-radius:6px;border-bottom:none;"></div>
<div class="r" style="left:724.50px;top:1107.90px;width:983.00px;height:43.00px;background:#f8f9fa;border-top-left-radius:6px;border-top-right-radius:6px;"></div>
<div class="r" style="left:724.50px;top:1158.60px;width:983.00px;height:2.00px;background:#3d8bfd;border-bottom-left-radius:2px;border-bottom-right-radius:2px;"></div>
<div class="t" style="left:737.80px;top:1123.80px;font-size:13.35px;line-height:13.35px;color:#212529;">Periodische Wiedervorlagen</div>
<svg class="r" style="left:1678px;top:1124px" width="17" height="11" viewBox="0 0 17 11"><path d="M1.5 1.5 L8.5 8.7 L15.5 1.5" fill="none" stroke="#212529" stroke-width="1.3"/></svg>
<svg class="r" style="left:94px;top:228px" width="20" height="29" viewBox="0 0 20 29"><path d="M1 1 L1 24.5 L6.8 19 L10.9 27.6 L14.6 26 L10.6 17.6 L18.2 17.6 Z" fill="#fff" stroke="#000" stroke-width="1.2" stroke-linejoin="miter"/></svg>
<svg class="r" style="left:96.5px;top:1298px" width="20" height="29" viewBox="0 0 20 29"><path d="M1 1 L1 24.5 L6.8 19 L10.9 27.6 L14.6 26 L10.6 17.6 L18.2 17.6 Z" fill="#fff" stroke="#000" stroke-width="1.2" stroke-linejoin="miter"/></svg>
<div class="r" style="left:0.00px;top:0.00px;width:1800.00px;height:2.00px;background:#c0c0c0;"></div>
<div class="r" style="left:0.00px;top:0.00px;width:2.00px;height:1689.00px;background:#c0c0c0;"></div>
<div class="r" style="left:1798.00px;top:0.00px;width:2.00px;height:1689.00px;background:#c0c0c0;"></div>
<div class="r" style="left:0.00px;top:1687.00px;width:1800.00px;height:2.00px;background:#c0c0c0;"></div>
</body></html>
